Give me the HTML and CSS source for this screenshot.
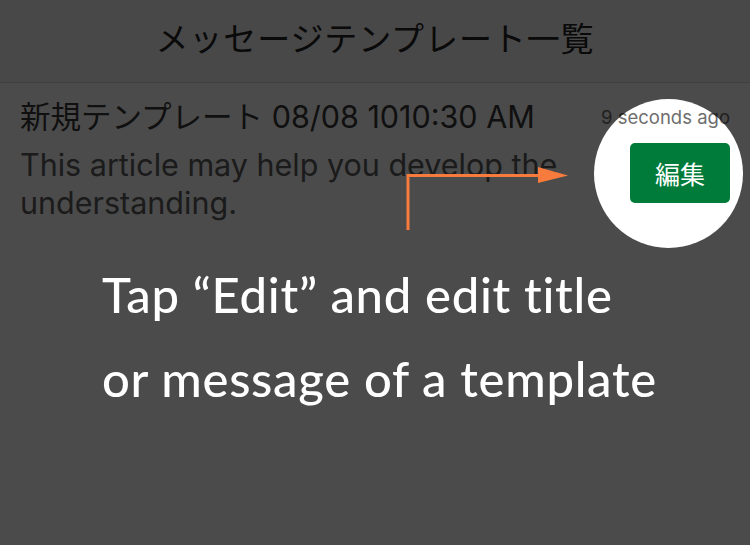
FILE: index.html
```html
<!DOCTYPE html>
<html>
<head>
    <meta charset="utf-8">
    <title>メッセージテンプレート一覧</title>
    <link rel="stylesheet" href="styles.css">
</head>
<body>
<div class="screen">
    <header class="nav">
        <h1>メッセージテンプレート一覧</h1>
    </header>
    <ul class="templates">
        <li class="template">
            <div class="template-main">
                <div class="template-title">新規テンプレート 08/08 1010:30 AM</div>
                <div class="template-body">This article may help you develop the understanding.</div>
            </div>
            <div class="template-side">
                <span class="template-time">9 seconds ago</span>
                <button class="edit-btn">編集</button>
            </div>
        </li>
    </ul>
</div>

<!-- coach mark over the list -->
<div class="coach">
    <div class="spotlight"></div>
    <svg class="pointer" width="170" height="70" viewBox="0 0 170 70">
        <path d="M10 66 V11.5 H142" fill="none" stroke="#f77b3c" stroke-width="3"/>
        <polygon points="140,3 170,11.5 140,19" fill="#f77b3c"/>
    </svg>
    <p class="coach-text">Tap “Edit” and edit title<br>or message of a template</p>
</div>
</body>
</html>
```

FILE: styles.css
```css
body {
    margin: 0;
    padding: 0;
    width: 750px;
    height: 545px;
    overflow: hidden;
    position: relative;
    background-color: #ffffff;
    font-family: 'Inter', 'Noto Sans CJK JP', sans-serif;
    color: #111;
}
.screen {
    height: 100%;
}
.nav {
    height: 83px;
    box-sizing: border-box;
    padding-bottom: 9px;
    display: flex;
    align-items: center;
    justify-content: center;
    background-color: #f4f4f4;
    border-bottom: 1px solid #d9d9d9;
}
.nav h1 {
    margin: 0;
    font-family: 'Noto Sans CJK JP', sans-serif;
    font-size: 33px;
    font-weight: 400;
    letter-spacing: 0.9px;
    color: #222;
}
.templates {
    list-style: none;
    margin: 0;
    padding: 0;
}
.template {
    display: flex;
    padding: 15px 20px 20px 20px;
}
.template-main {
    flex: 1;
    max-width: 560px;
}
.template-title {
    font-size: 30.5px;
    line-height: 38px;
    color: #383838;
}
.template-body {
    margin-top: 10px;
    font-size: 30.5px;
    line-height: 38px;
    color: #5c5c5c;
}
.template-side {
    margin-left: auto;
    display: flex;
    flex-direction: column;
    align-items: flex-end;
}
.template-time {
    font-size: 18.5px;
    line-height: 24px;
    margin-top: 7px;
    color: #6e6e6e;
}
.edit-btn {
    margin-top: 14px;
    width: 100px;
    height: 60px;
    border: none;
    border-radius: 5px;
    background-color: #007b3a;
    color: #fff;
    font-family: 'Noto Sans CJK JP', sans-serif;
    font-size: 25px;
    padding: 0;
}

/* coach mark */
.coach {
    position: absolute;
    top: 0;
    left: 0;
    width: 750px;
    height: 545px;
    overflow: hidden;
}
.spotlight {
    position: absolute;
    left: 594px;
    top: 99px;
    width: 149px;
    height: 149px;
    border-radius: 50%;
    box-shadow: 0 0 3px 900px rgba(0, 0, 0, 0.705);
}
.pointer {
    position: absolute;
    left: 398px;
    top: 164px;
}
.coach-text {
    position: relative;
    margin: 0;
    padding: 252px 0 0 102px;
    font-family: 'Lato', sans-serif;
    font-size: 49px;
    font-weight: 500;
    line-height: 84px;
    letter-spacing: 0.7px;
    color: #fff;
}
```
